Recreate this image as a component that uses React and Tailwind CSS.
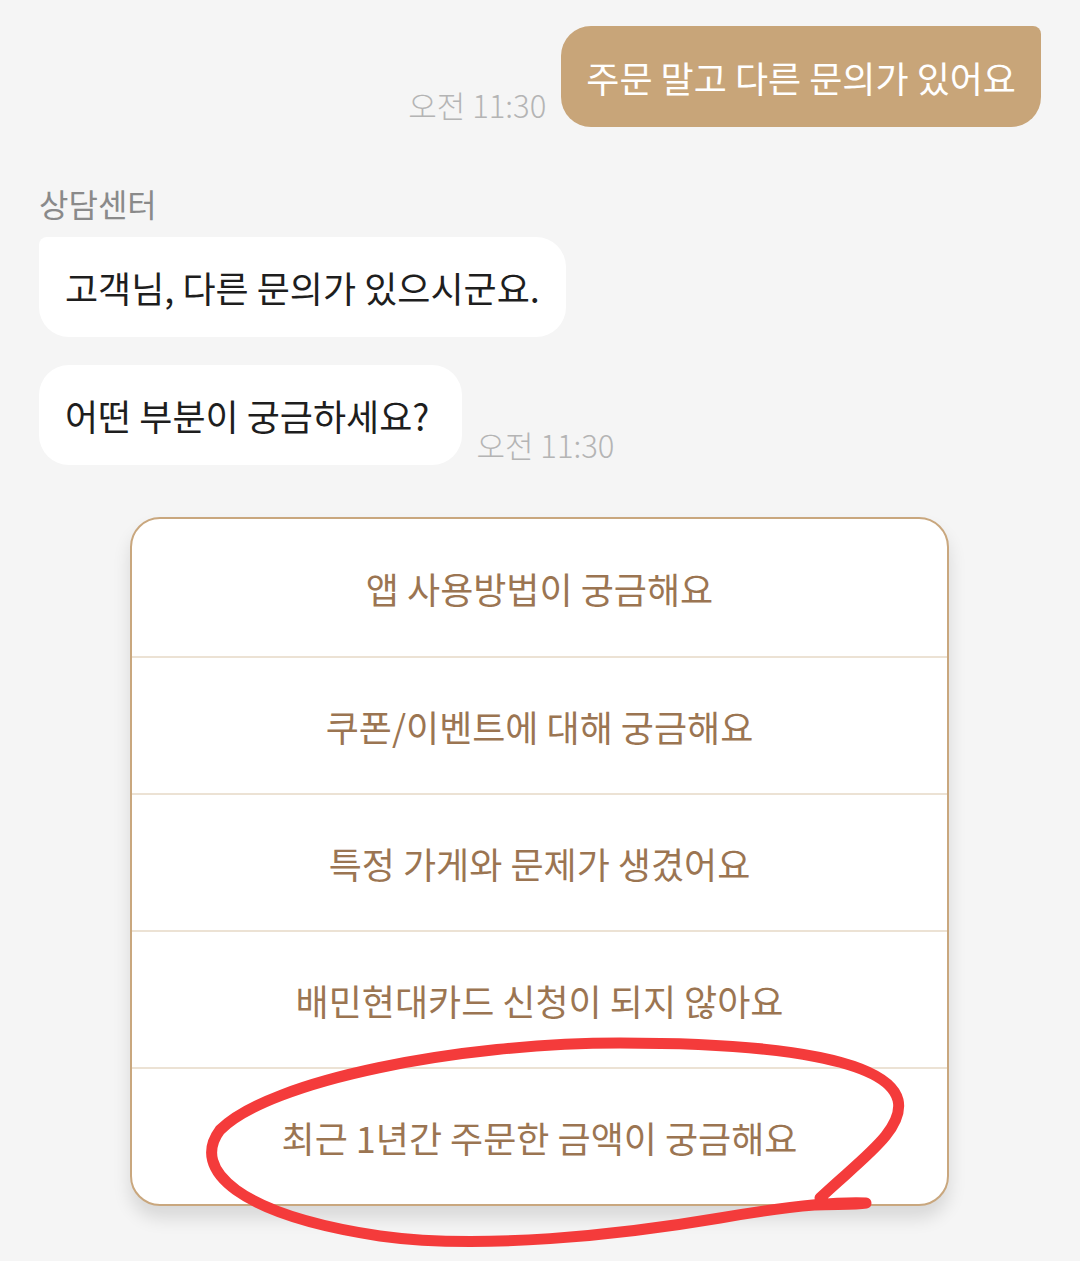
import React from "react";

const options = [
  "앱 사용방법이 궁금해요",
  "쿠폰/이벤트에 대해 궁금해요",
  "특정 가게와 문제가 생겼어요",
  "배민현대카드 신청이 되지 않아요",
  "최근 1년간 주문한 금액이 궁금해요",
];

function Time({ className = "" }) {
  return (
    <span className={`text-[31px] font-light leading-none text-[#b4b4b4] whitespace-nowrap ${className}`}>
      오전 11:30
    </span>
  );
}

// hand-drawn red marker over the last option
function Circle() {
  return (
    <svg
      className="absolute left-0 top-0 pointer-events-none"
      width="1080"
      height="1261"
      viewBox="0 0 1080 1261"
    >
      <path
        d="M820 1198 C 860 1160, 905 1130, 898 1100 C 888 1060, 780 1043, 620 1043 C 460 1043, 270 1080, 220 1130 C 190 1170, 240 1215, 380 1236 C 480 1250, 620 1235, 720 1218 C 790 1206, 840 1202, 866 1203 C 855 1205, 835 1204, 815 1205"
        fill="none"
        stroke="#f43b3b"
        strokeWidth="11"
        strokeLinecap="round"
        strokeLinejoin="round"
      />
    </svg>
  );
}

export default function App() {
  return (
    <div
      className="relative w-[1080px] h-[1261px] overflow-hidden bg-[#f5f5f5]"
      style={{ fontFamily: '"Noto Sans CJK KR", "Noto Sans", sans-serif' }}
    >
      <div className="flex flex-col pt-[26px] pl-[39px] pr-[39px]">
        <div className="flex items-end justify-end gap-[15px]">
          <Time className="mb-[7px]" />
          <div className="h-[101px] flex items-center px-[25px] bg-[#c8a579] rounded-[30px] rounded-tr-[8px] text-white text-[36px] leading-none">
            주문 말고 다른 문의가 있어요
          </div>
        </div>

        <div className="mt-[60px] text-[32px] leading-none text-[#8a8a8a]">상담센터</div>

        <div className="mt-[18px] flex">
          <div className="h-[100px] flex items-center px-[26px] bg-white rounded-[30px] rounded-tl-[8px] text-[36px] leading-none text-[#1e1e1e]">
            고객님, 다른 문의가 있으시군요.
          </div>
        </div>

        <div className="mt-[28px] flex items-end gap-[14px]">
          <div className="h-[100px] flex items-center pl-[26px] pr-[33px] bg-white rounded-[30px] text-[36px] leading-none text-[#1e1e1e]">
            어떤 부분이 궁금하세요?
          </div>
          <Time className="mb-[5px]" />
        </div>

        <div className="mt-[52px] ml-[91px] w-[819px] bg-white border-2 border-[#c9a77e] rounded-[30px] overflow-hidden shadow-[0_12px_18px_rgba(0,0,0,0.12)]">
          {options.map((o, i) => (
            <div
              key={o}
              className={`h-[137px] flex items-center justify-center text-[36px] leading-none text-[#9b7552] ${
                i > 0 ? "border-t-2 border-[#ece2d4]" : ""
              }`}
            >
              {o}
            </div>
          ))}
        </div>
      </div>
      <Circle />
    </div>
  );
}
